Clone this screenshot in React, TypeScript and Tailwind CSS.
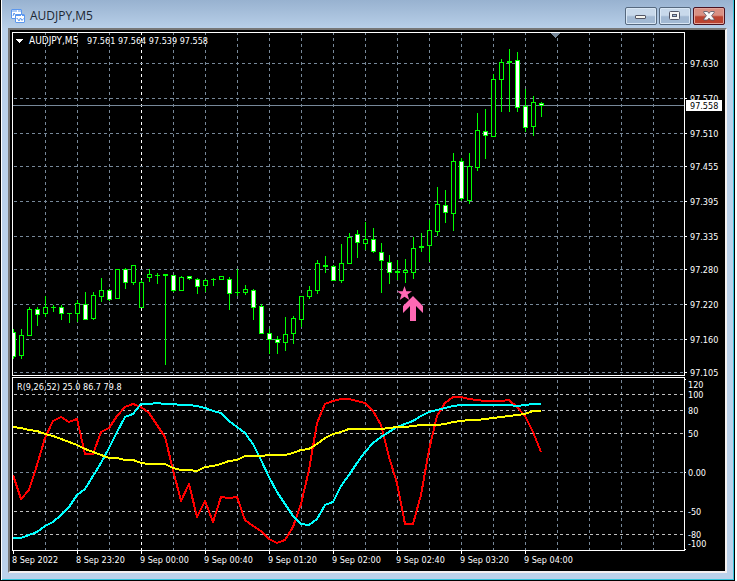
interface Candle {
  high: number
  top: number
  bottom: number
  low: number
  // u = up, d = down, x = open and close are equal
  kind: 'u' | 'd' | 'x'
}

const c = (high: number, top: number, bottom: number, low: number, kind: Candle['kind']): Candle => ({
  high,
  top,
  bottom,
  low,
  kind,
})

const candles: Candle[] = [
  c(329, 332, 357, 359, 'd'),
  c(329, 335, 356, 359, 'u'),
  c(307, 309, 336, 336, 'u'),
  c(307, 309, 315, 326, 'd'),
  c(296, 307, 314, 317, 'u'),
  c(305, 307, 308, 312, 'x'),
  c(305, 307, 314, 320, 'd'),
  c(313, 313, 314, 323, 'x'),
  c(300, 303, 314, 322, 'u'),
  c(292, 304, 320, 320, 'd'),
  c(292, 295, 319, 320, 'u'),
  c(278, 290, 297, 302, 'u'),
  c(289, 290, 300, 301, 'd'),
  c(269, 269, 299, 299, 'u'),
  c(268, 269, 283, 289, 'd'),
  c(265, 265, 283, 285, 'u'),
  c(280, 282, 308, 308, 'u'),
  c(269, 274, 278, 282, 'u'),
  c(273, 275, 276, 284, 'x'),
  c(274, 274, 276, 365, 'x'),
  c(275, 275, 291, 292, 'd'),
  c(276, 277, 291, 291, 'u'),
  c(276, 276, 279, 280, 'd'),
  c(278, 279, 287, 294, 'd'),
  c(279, 280, 286, 292, 'u'),
  c(278, 279, 280, 286, 'x'),
  c(276, 276, 280, 280, 'u'),
  c(277, 279, 294, 310, 'd'),
  c(269, 292, 293, 296, 'x'),
  c(285, 289, 293, 295, 'u'),
  c(289, 290, 308, 320, 'd'),
  c(304, 306, 334, 334, 'd'),
  c(329, 333, 340, 354, 'd'),
  c(336, 339, 343, 354, 'd'),
  c(317, 334, 343, 351, 'u'),
  c(316, 318, 334, 344, 'u'),
  c(296, 296, 320, 327, 'u'),
  c(286, 290, 297, 299, 'u'),
  c(260, 263, 291, 294, 'u'),
  c(256, 265, 267, 273, 'x'),
  c(265, 266, 281, 281, 'd'),
  c(244, 263, 281, 283, 'u'),
  c(233, 237, 264, 264, 'u'),
  c(230, 234, 243, 258, 'd'),
  c(222, 239, 244, 250, 'u'),
  c(228, 239, 252, 253, 'd'),
  c(243, 252, 261, 293, 'd'),
  c(255, 262, 273, 284, 'd'),
  c(260, 271, 273, 280, 'x'),
  c(259, 270, 273, 283, 'u'),
  c(237, 248, 273, 279, 'u'),
  c(233, 246, 248, 252, 'x'),
  c(220, 230, 246, 262, 'u'),
  c(187, 204, 232, 236, 'u'),
  c(190, 205, 213, 223, 'd'),
  c(153, 161, 214, 231, 'u'),
  c(158, 161, 199, 201, 'd'),
  c(153, 166, 201, 204, 'u'),
  c(113, 130, 168, 171, 'u'),
  c(109, 131, 136, 159, 'd'),
  c(74, 79, 137, 137, 'u'),
  c(59, 62, 80, 112, 'u'),
  c(49, 61, 63, 112, 'x'),
  c(52, 60, 108, 112, 'd'),
  c(89, 106, 128, 132, 'd'),
  c(96, 102, 127, 136, 'u'),
  c(102, 103, 106, 117, 'd'),
]

// One y value per bar for each of the three oscillator periods
const fast = [
  475, 499, 490, 465, 438, 421, 417, 422, 419, 454, 454, 432, 428, 416, 407, 404, 407, 413, 425, 437, 470, 501, 484,
  517, 501, 522, 497, 498, 497, 520, 526, 531, 539, 543, 540, 527, 504, 470, 423, 404, 401, 399, 399, 401, 403, 411,
  425, 457, 483, 524, 524, 495, 450, 416, 403, 397, 397, 399, 400, 401, 401, 401, 400, 407, 416, 432, 452,
]
const middle = [
  538, 538, 535, 532, 526, 522, 515, 507, 495, 489, 476, 463, 448, 432, 417, 414, 404, 404, 403, 404, 404, 405, 405,
  406, 408, 411, 413, 421, 427, 433, 444, 460, 477, 492, 504, 516, 524, 525, 519, 505, 502, 486, 475, 463, 452, 443,
  437, 432, 427, 424, 421, 416, 412, 410, 408, 406, 405, 405, 405, 405, 405, 405, 405, 406, 405, 404, 404,
]
const slow = [
  427, 428, 430, 431, 434, 436, 439, 442, 445, 449, 452, 455, 458, 458, 460, 460, 463, 464, 464, 464, 468, 470, 470,
  471, 467, 466, 464, 461, 460, 456, 456, 456, 455, 455, 455, 453, 450, 449, 444, 438, 434, 432, 429, 429, 429, 429,
  429, 428, 427, 427, 426, 425, 425, 425, 424, 422, 421, 420, 420, 419, 418, 417, 416, 415, 414, 411, 411,
]

const prices = [
  { label: '97.630', y: 63 },
  { label: '97.570', y: 98 },
  { label: '97.510', y: 133 },
  { label: '97.455', y: 166 },
  { label: '97.395', y: 201 },
  { label: '97.335', y: 236 },
  { label: '97.280', y: 269 },
  { label: '97.220', y: 304 },
  { label: '97.160', y: 339 },
  { label: '97.105', y: 372 },
]

const levels = [
  { label: '120', y: 384, line: '' },
  { label: '100', y: 394, line: '#c0c0c0' },
  { label: '80', y: 410, line: '#c0c0c0' },
  { label: '50', y: 433, line: '#c0c0c0' },
  { label: '0.00', y: 472, line: '#778899' },
  { label: '-50', y: 511, line: '#c0c0c0' },
  { label: '-80', y: 534, line: '#c0c0c0' },
  { label: '-100', y: 543, line: '' },
]

const times = [
  '8 Sep 2022',
  '8 Sep 23:20',
  '9 Sep 00:00',
  '9 Sep 00:40',
  '9 Sep 01:20',
  '9 Sep 02:00',
  '9 Sep 02:40',
  '9 Sep 03:20',
  '9 Sep 04:00',
]

const gridX = Array.from({ length: 20 }, (_, i) => 45 + i * 32)

const barX = (i: number) => 13 + i * 8
const toPoints = (values: number[]) => values.map((y, i) => `${barX(i)},${y}`).join(' ')

function CandleMark({ candle, x }: { candle: Candle; x: number }) {
  const { high, top, bottom, low, kind } = candle
  return (
    <g fill="#00ff00">
      <rect x={x} y={high} width={1} height={low - high} />
      <rect x={x - 2} y={top} width={5} height={bottom - top} />
      {kind !== 'x' && (
        <rect x={x - 1} y={top + 1} width={3} height={bottom - top - 2} fill={kind === 'd' ? '#ffffff' : '#000000'} />
      )}
    </g>
  )
}

function Chart() {
  return (
    <svg
      className="block w-full bg-black font-['DejaVu_Sans_Condensed',sans-serif] text-[9px]"
      viewBox="10 30 715 541"
      shapeRendering="crispEdges"
      role="img"
      aria-label="AUDJPY,M5"
    >
      <defs>
        <clipPath id="plot">
          <rect x={13} y={33} width={671} height={517} />
        </clipPath>
      </defs>

      {/* Grid */}
      <g stroke="#778899" strokeDasharray="3 3">
        {gridX.map((x) => (
          <g key={x} stroke={x === 141 ? '#ffffff' : '#778899'}>
            <line x1={x + 0.5} y1={32} x2={x + 0.5} y2={375} />
            <line x1={x + 0.5} y1={380} x2={x + 0.5} y2={550} />
          </g>
        ))}
        {prices.map((p) => (
          <line key={p.label} x1={14} y1={p.y + 0.5} x2={684} y2={p.y + 0.5} />
        ))}
        {levels
          .filter((l) => l.line)
          .map((l) => (
            <line key={l.label} x1={14} y1={l.y + 0.5} x2={684} y2={l.y + 0.5} stroke={l.line} />
          ))}
      </g>

      <rect x={13} y={105} width={671} height={1} fill="#778899" />
      <path d="M551 33h9v1h-1v1h-1v1h-1v1h-1v1h-1v-1h-1v-1h-1v-1h-1v-1h-1z" fill="#778899" />

      <g clipPath="url(#plot)">
        {candles.map((candle, i) => (
          <CandleMark key={i} candle={candle} x={barX(i)} />
        ))}
        <g fill="none" strokeWidth={2} strokeLinejoin="round">
          <polyline points={toPoints(fast)} stroke="#ff0000" />
          <polyline points={toPoints(middle)} stroke="#00ffff" />
          <polyline points={toPoints(slow)} stroke="#ffff00" />
        </g>
      </g>

      {/* Buy signal */}
      <g fill="#ff69b4" shapeRendering="auto">
        <path d="M404.5 286l1.800 5.200h5.700l-4.500 3.300 1.800 5.500-4.800-3.300-4.800 3.300 1.800-5.500-4.500-3.300h5.700z" />
        <path d="M413 296l10 10v7l-7-7v15h-6v-15l-7 7v-7z" />
      </g>

      {/* Panel frames and axis ticks */}
      <g fill="#ffffff">
        <rect x={12} y={32} width={673} height={1} />
        <rect x={12} y={32} width={1} height={344} />
        <rect x={684} y={32} width={1} height={344} />
        <rect x={12} y={375} width={673} height={1} />
        <rect x={12} y={377} width={673} height={1} />
        <rect x={12} y={377} width={1} height={174} />
        <rect x={684} y={377} width={1} height={174} />
        <rect x={12} y={550} width={673} height={1} />
        {prices.map((p) => (
          <rect key={p.label} x={685} y={p.y} width={2} height={1} />
        ))}
        <rect x={685} y={379} width={1} height={1} />
        <rect x={685} y={472} width={1} height={1} />
        <rect x={685} y={549} width={1} height={1} />
        {times.map((t, i) => (
          <rect key={t} x={13 + i * 64} y={551} width={1} height={3} />
        ))}
      </g>

      <g fill="#ffffff">
        <path d="M16 39h7v1h-1v1h-1v1h-1v1h-1v-1h-1v-1h-1v-1h-1z" />
        <text x={29} y={44} className="text-[10px]">
          AUDJPY,M5
        </text>
        <text x={87} y={44}>
          97.561 97.564 97.539 97.558
        </text>
        <text x={17} y={390}>
          R(9,26,52) 25.0 86.7 79.8
        </text>
        {prices.map((p) => (
          <text key={p.label} x={690} y={p.y + 4}>
            {p.label}
          </text>
        ))}
        {levels.map((l) => (
          <text key={l.label} x={688} y={l.y + 4}>
            {l.label}
          </text>
        ))}
        {times.map((t, i) => (
          <text key={t} x={12 + i * 64} y={563}>
            {t}
          </text>
        ))}
      </g>

      {/* Current price */}
      <rect x={686} y={100} width={36} height={11} fill="#ffffff" />
      <text x={690} y={109} fill="#000000">
        97.558
      </text>
    </svg>
  )
}

function ChartIcon() {
  return (
    <svg className="h-4 w-4" viewBox="0 0 16 16" fill="#ffffff" stroke="#5b97ee" aria-hidden="true">
      <rect x={1.5} y={1.5} width={10} height={9} rx={0.5} />
      <path d="M2 3h9" strokeDasharray="5 1" />
      <path d="M3 8l1-3 1.500 2" fill="none" />
      <rect x={5.5} y={6.5} width={9} height={8} rx={0.5} />
      <path d="M6 7.500h8" strokeDasharray="5 1" />
      <path d="M6.500 10.500h1l1.500 2.500 1.500-3 1.500 2.500 1.500-2" fill="none" />
    </svg>
  )
}

const frameButton =
  'flex h-[18px] w-8 items-center justify-center rounded-xs border border-[#56697f] bg-linear-to-b from-[#c8d9eb] from-45% to-[#a2b9d3] to-55% shadow-[inset_0_0_0_1px_#d9e7f5]'

export default function App() {
  return (
    <div className="bg-white pr-0.5">
      <div className="border-x border-b border-black bg-white pl-px">
        <div className="border-r border-b border-[#35c5dc] bg-[#bad1ea] bg-linear-to-b from-[#98b2d0] to-[#bad1ea] to-[30px] px-1.5 pb-1.5">
          <header className="flex h-7 items-center justify-between px-0.5 pt-1">
            <div className="flex items-center gap-1">
              <ChartIcon />
              <h1 className="font-['Open_Sans',sans-serif] text-xs leading-4 text-[#1c2733]">AUDJPY,M5</h1>
            </div>
            <div className="flex gap-0.5">
              <button type="button" aria-label="Minimize" className={frameButton}>
                <svg className="h-3 w-3" viewBox="0 0 12 12" aria-hidden="true">
                  <rect x={0.5} y={5.5} width={10} height={3} rx={0.5} fill="#f5f5ee" stroke="#535666" />
                </svg>
              </button>
              <button type="button" aria-label="Maximize" className={frameButton}>
                <svg className="h-3 w-3" viewBox="0 0 12 12" fill="#f5f5f5" stroke="#535666" aria-hidden="true">
                  <rect x={0.5} y={1.5} width={10} height={8} rx={1} />
                  <rect x={3.5} y={4.5} width={4} height={2} fill="#9db8d8" />
                </svg>
              </button>
              <button
                type="button"
                aria-label="Close"
                className="flex h-[18px] w-8 items-center justify-center rounded-xs border border-[#4a1220] bg-linear-to-b from-[#d99083] from-45% to-[#bb4330] to-55% shadow-[inset_0_0_0_1px_#e3a59b]"
              >
                <svg className="h-3 w-3" viewBox="0 0 12 12" aria-hidden="true">
                  <path
                    d="M.8 1.500h3.600L6 3.400 7.600 1.500h3.600v1L8.600 5.700l2.600 3.300v1H7.600L6 8.100 4.400 10H.8V9l2.600-3.300L.8 2.500z"
                    fill="#f8f8f8"
                    stroke="#535666"
                    strokeWidth={0.8}
                  />
                </svg>
              </button>
            </div>
          </header>
          <main className="border-2 border-t-[#777777] border-r-[#f4f0f0] border-b-[#f4f0f0] border-l-[#777777]">
            <Chart />
          </main>
        </div>
      </div>
    </div>
  )
}
